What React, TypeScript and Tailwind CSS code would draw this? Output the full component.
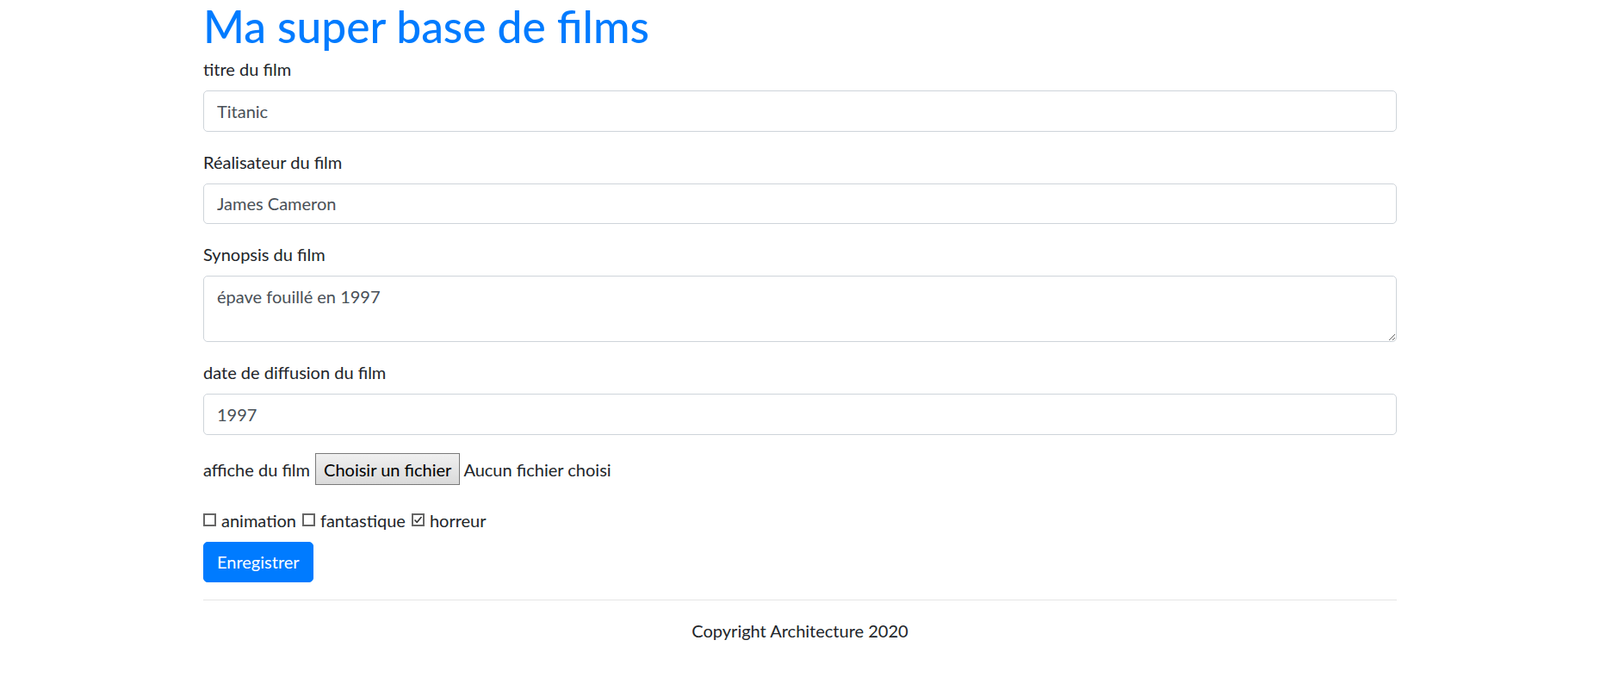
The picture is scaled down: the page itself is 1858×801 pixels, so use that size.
import React from 'react'

const Field = ({ label, value }: { label: string; value: string }) => (
  <div className="mb-[20px]">
    <label className="block mb-[10px]">{label}</label>
    <input
      readOnly
      defaultValue={value}
      className="block w-full h-[47.5px] px-[15px] border border-[#ced4da] rounded-[5px] text-[#495057] bg-white outline-none"
    />
  </div>
)

const Box = ({ checked }: { checked?: boolean }) => (
  <span className="inline-flex items-center justify-center w-[15px] h-[15px] border-2 border-[#666] bg-white">
    {checked && (
      <svg width="11" height="11" viewBox="0 0 11 11">
        <path d="M1.5 5.5 L4.2 8.2 L9.5 2" fill="none" stroke="#333" strokeWidth="1.6" />
      </svg>
    )}
  </span>
)

const App = () => {
  const genres = [
    { name: 'animation', checked: false },
    { name: 'fantastique', checked: false },
    { name: 'horreur', checked: true },
  ]
  return (
    <div className="min-h-screen bg-white font-['Lato','Open_Sans',sans-serif] text-[20px] leading-[30px] text-[#212529]">
      <div className="mx-auto w-[1386px]">
        <h1 className="text-[51.5px] leading-[60px] font-medium text-[#007bff] mb-[5px]">Ma super base de films</h1>
        <form>
          <Field label="titre du film" value="Titanic" />
          <Field label="Réalisateur du film" value="James Cameron" />
          <div className="mb-[20px]">
            <label className="block mb-[10px]">Synopsis du film</label>
            <textarea
              readOnly
              defaultValue="épave fouillé en 1997"
              className="block w-full h-[77px] px-[15px] py-[7.5px] border border-[#ced4da] rounded-[5px] text-[#495057] bg-white outline-none"
            />
          </div>
          <Field label="date de diffusion du film" value="1997" />
          <div className="flex items-center h-[40px]">
            <span>affiche du film</span>
            <span className="ml-[6px] h-[37px] px-[9px] flex items-center border border-[#7a7a7a] bg-gradient-to-b from-[#f0f0f0] to-[#dadada] text-black">
              Choisir un fichier
            </span>
            <span className="ml-[4px]">Aucun fichier choisi</span>
          </div>
          <div className="flex items-center h-[30px] mt-[24px]">
            {genres.map((g, i) => (
              <label key={g.name} className={`flex items-center ${i > 0 ? 'ml-[7px]' : ''}`}>
                <Box checked={g.checked} />
                <span className="ml-[6px]">{g.name}</span>
              </label>
            ))}
          </div>
          <button
            type="button"
            className="mt-[10px] h-[47.5px] px-[15px] rounded-[5px] bg-[#007bff] text-white border border-[#007bff]"
          >
            Enregistrer
          </button>
        </form>
        <hr className="mt-[20px] border-t border-[rgba(0,0,0,0.1)]" />
        <p className="mt-[20px] text-center">Copyright Architecture 2020</p>
      </div>
    </div>
  )
}

export default App
